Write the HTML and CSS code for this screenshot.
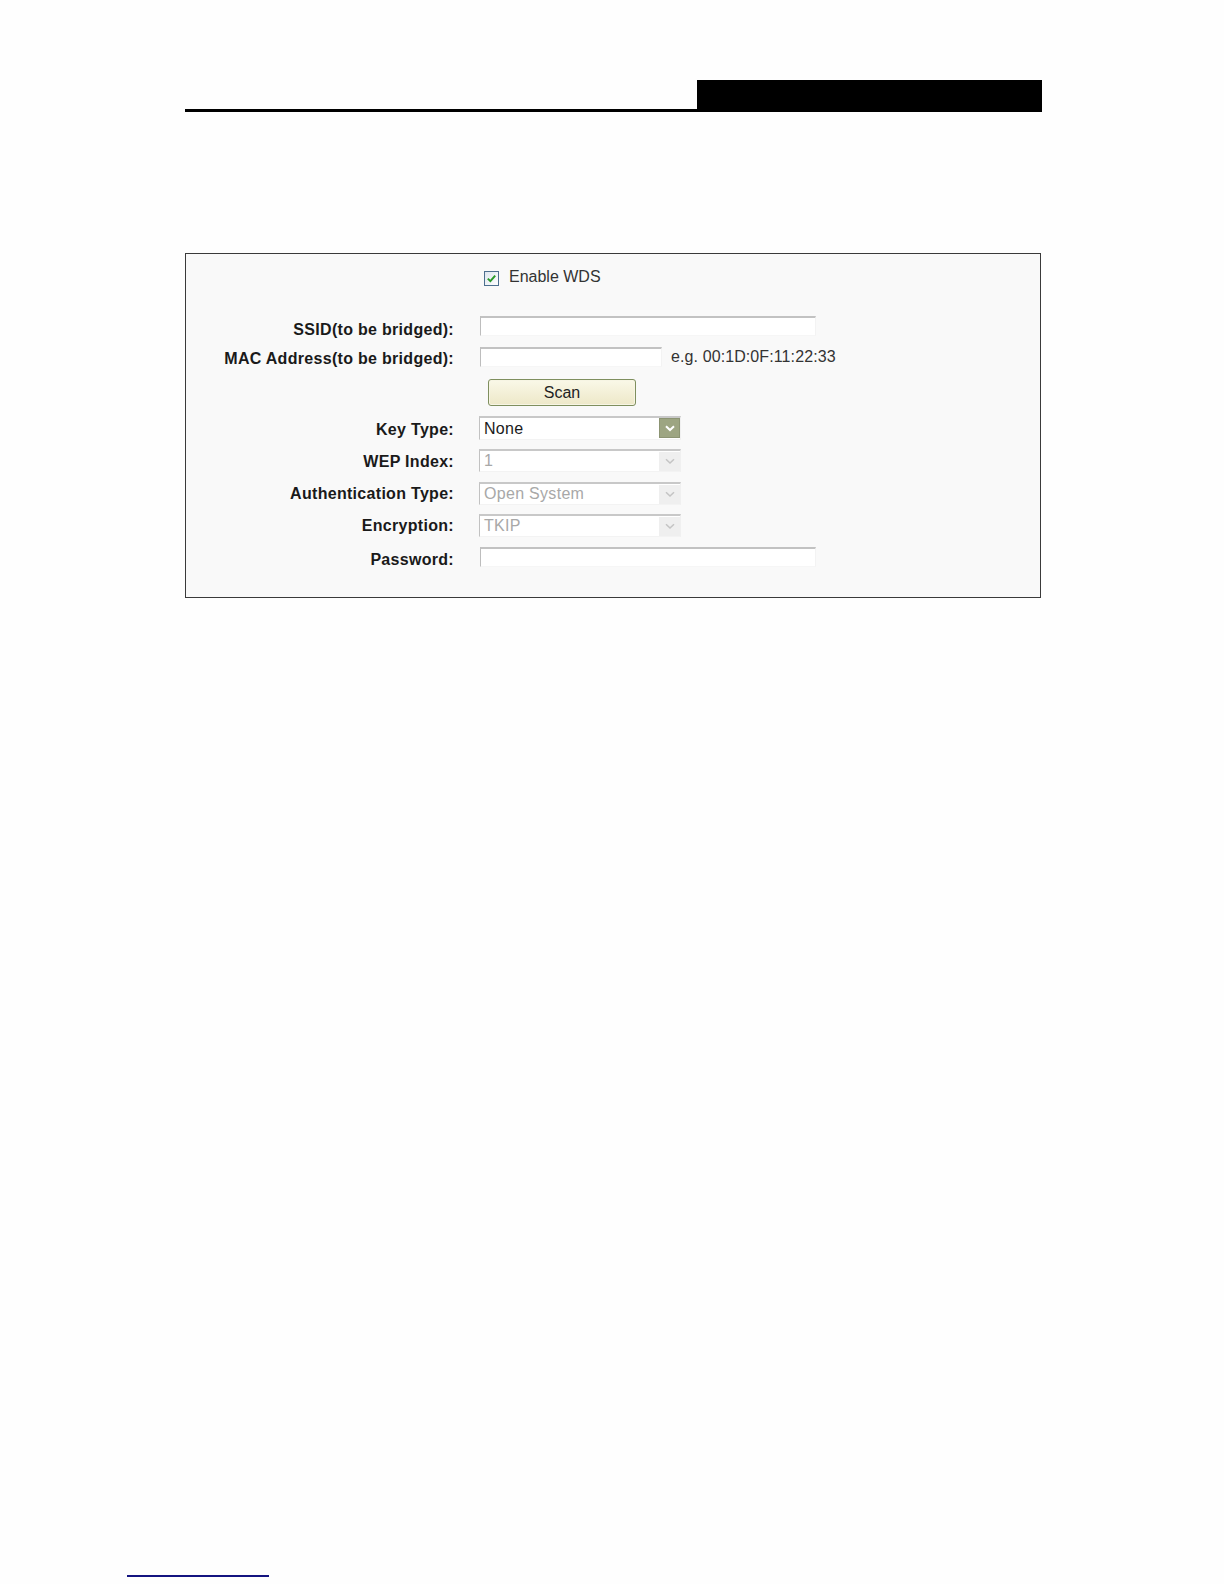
FILE: index.html
```html
<!DOCTYPE html>
<html lang="en">
<head>
<meta charset="utf-8">
<title>WDS</title>
<link rel="stylesheet" href="styles.css">
</head>
<body>
<div class="page">
  <header class="top">
    <div class="rule"></div>
    <div class="tab"></div>
  </header>

  <section class="panel">
    <div class="row r-check">
      <div class="lbl"></div>
      <div class="ctl">
        <span class="cb">
          <svg width="15" height="15" viewBox="0 0 15 15">
            <defs>
              <linearGradient id="cbg" x1="0" y1="0" x2="1" y2="1">
                <stop offset="0" stop-color="#dde5ee"/>
                <stop offset="1" stop-color="#ffffff"/>
              </linearGradient>
            </defs>
            <rect x="0.5" y="0.5" width="14" height="14" fill="url(#cbg)" stroke="#4d6f8f"/>
            <path d="M3.8 7.6 L6.4 10.1 L11.2 4.6" fill="none" stroke="#2a9a2a" stroke-width="2"/>
          </svg>
        </span>
        <span class="txt">Enable WDS</span>
      </div>
    </div>

    <div class="row r-ssid">
      <div class="lbl">SSID(to be bridged):</div>
      <div class="ctl"><span class="inp wide"></span></div>
    </div>

    <div class="row r-mac">
      <div class="lbl">MAC Address(to be bridged):</div>
      <div class="ctl"><span class="inp narrow"></span><span class="txt hint">e.g. 00:1D:0F:11:22:33</span></div>
    </div>

    <div class="row r-scan">
      <div class="lbl"></div>
      <div class="ctl"><span class="btn">Scan</span></div>
    </div>

    <div class="row r-key">
      <div class="lbl">Key Type:</div>
      <div class="ctl">
        <span class="sel active"><span class="val">None</span><span class="arr"><svg width="10" height="7" viewBox="0 0 10 7"><path d="M1 1.2 L5 5 L9 1.2" fill="none" stroke="#ffffff" stroke-width="2"/></svg></span></span>
      </div>
    </div>

    <div class="row r-wep">
      <div class="lbl">WEP Index:</div>
      <div class="ctl">
        <span class="sel off"><span class="val">1</span><span class="arr"><svg width="10" height="7" viewBox="0 0 10 7"><path d="M1 1.2 L5 5 L9 1.2" fill="none" stroke="#c4c4c4" stroke-width="1.5"/></svg></span></span>
      </div>
    </div>

    <div class="row r-auth">
      <div class="lbl">Authentication Type:</div>
      <div class="ctl">
        <span class="sel off"><span class="val">Open System</span><span class="arr"><svg width="10" height="7" viewBox="0 0 10 7"><path d="M1 1.2 L5 5 L9 1.2" fill="none" stroke="#c4c4c4" stroke-width="1.5"/></svg></span></span>
      </div>
    </div>

    <div class="row r-enc">
      <div class="lbl">Encryption:</div>
      <div class="ctl">
        <span class="sel off"><span class="val">TKIP</span><span class="arr"><svg width="10" height="7" viewBox="0 0 10 7"><path d="M1 1.2 L5 5 L9 1.2" fill="none" stroke="#c4c4c4" stroke-width="1.5"/></svg></span></span>
      </div>
    </div>

    <div class="row r-pwd">
      <div class="lbl">Password:</div>
      <div class="ctl"><span class="inp wide"></span></div>
    </div>
  </section>
  <div class="foot-rule"></div>
</div>
</body>
</html>
```

FILE: styles.css
```css
html, body {
  margin: 0;
  padding: 0;
  background: #fefefe;
}
body {
  font-family: "Liberation Sans", Arial, sans-serif;
  color: #222;
  height: 1584px;
  overflow: hidden;
}
.page {
  display: flow-root;
  margin-left: 185px;
  width: 857px;
}
.top {
  display: flex;
  margin-top: 80px;
  height: 32px;
}
.rule {
  flex: 1;
  align-self: flex-end;
  height: 3px;
  background: #000;
}
.tab {
  width: 345px;
  background: #000;
}
.panel {
  margin-top: 141px;
  border: 1px solid #3a3a3a;
  background: #f9f9f9;
  padding: 11px 0 0 0;
  height: 345px;
  width: 856px;
  box-sizing: border-box;
}
.row {
  display: grid;
  grid-template-columns: 268px 1fr;
  grid-template-rows: 100%;
  column-gap: 25px;
  align-items: center;
}
.lbl {
  text-align: right;
  font-weight: bold;
  font-size: 16px;
  line-height: 18px;
  letter-spacing: 0.3px;
  color: #1a1a1a;
  padding-top: 0;
  margin-bottom: 0;
}
.ctl {
  display: flex;
  align-items: center;
}
.txt {
  font-size: 16px;
  color: #333;
}
.cb {
  display: inline-flex;
  margin-left: 5px;
  margin-right: 10px;
}
.r-check { height: 26px; }
.r-check .txt { margin-top: -2px; }
.r-ssid { margin-top: 25px; height: 20px; }
.r-ssid .lbl { padding-top: 4px; margin-bottom: -4px; }
.r-mac { margin-top: 11px; height: 20px; }
.r-mac .lbl { padding-top: 2px; margin-bottom: -2px; }
.r-scan { margin-top: 12px; height: 27px; }
.r-key { margin-top: 10px; height: 24px; }
.r-key .lbl { padding-top: 2px; margin-bottom: -2px; }
.r-wep { margin-top: 9px; height: 23px; }
.r-wep .lbl { padding-top: 1px; margin-bottom: -1px; }
.r-auth { margin-top: 10px; height: 23px; }
.r-enc { margin-top: 9px; height: 23px; }
.r-pwd { margin-top: 10px; height: 20px; }
.r-pwd .lbl { padding-top: 3px; margin-bottom: -3px; }

.inp {
  display: block;
  box-sizing: border-box;
  margin-left: 1px;
  height: 20px;
  background: #ffffff;
  border-top: 2px solid #c2c2c2;
  border-left: 1px solid #bdbdbd;
  border-right: 1px solid #f3f3f3;
  border-bottom: 1px solid #f6f6f6;
}
.inp.wide { width: 336px; }
.inp.narrow { width: 182px; }
.hint { margin-left: 9px; letter-spacing: 0.1px; }

.btn {
  display: flex;
  align-items: center;
  justify-content: center;
  box-sizing: border-box;
  margin-left: 9px;
  width: 148px;
  height: 27px;
  border: 1px solid #7f8f5e;
  border-radius: 3px;
  background: linear-gradient(#faf8e8, #ede8c8);
  font-size: 16px;
  color: #222;
  box-shadow: inset 0 0 0 1px #f7f5e4;
}

.sel {
  display: flex;
  align-items: flex-start;
  justify-content: space-between;
  box-sizing: border-box;
  width: 202px;
  height: 23px;
  background: #ffffff;
  border-top: 2px solid #c8c8c8;
  border-left: 1px solid #c2c2c2;
  border-right: 1px solid #f0f0f0;
  border-bottom: 1px solid #f3f3f3;
  padding: 0 0 0 4px;
}
.sel.active { height: 24px; }
.val {
  font-size: 16px;
  line-height: 20px;
  letter-spacing: 0.3px;
}
.sel.active .val { color: #1a1a1a; margin-top: 1px; }
.sel.off .val { color: #a8a8a8; }
.arr {
  display: flex;
  align-items: center;
  justify-content: center;
  width: 21px;
  height: 20px;
  box-sizing: border-box;
}
.sel.active .arr {
  background: #9da582;
  border: 1px solid #8c9473;
}
.sel.off .arr {
  background: #efefef;
  height: 19px;
  margin-top: 1px;
}
.foot-rule {
  margin-top: 977px;
  margin-left: -58px;
  width: 142px;
  height: 2px;
  background: #141480;
}
```
